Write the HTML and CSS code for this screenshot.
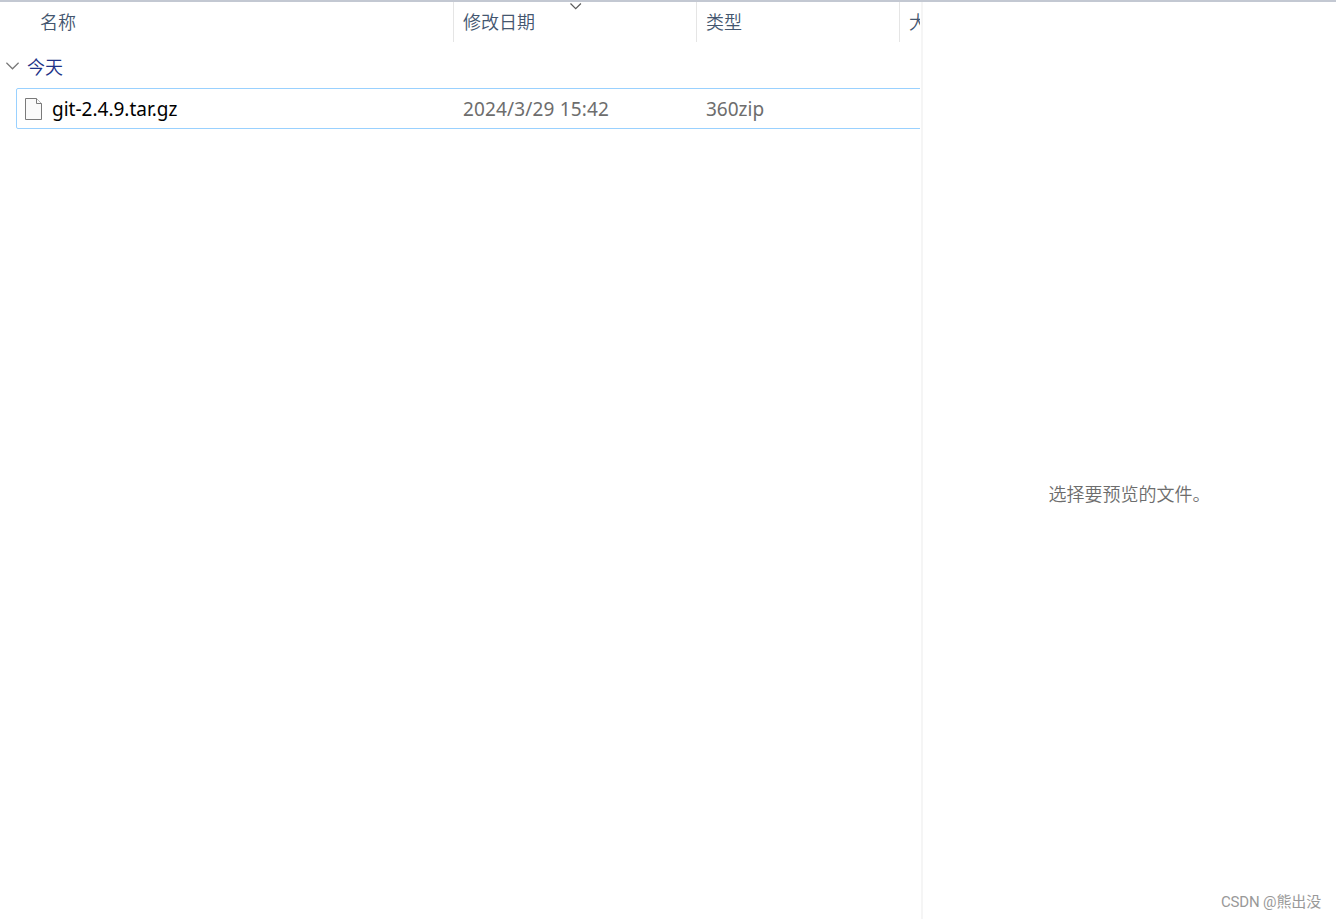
FILE: index.html
```html
<!DOCTYPE html>
<html lang="zh-CN">

<head>
    <meta charset="UTF-8">
    <meta name="viewport" content="width=device-width, initial-scale=1.0">
    <title>文件列表</title>
    <link rel="stylesheet" href="styles.css">
</head>

<body>
    <div class="explorer">
        <div class="file-list">
            <div class="list-header">
                <div class="col col-name">名称</div>
                <div class="col col-date">修改日期
                    <svg class="sort-arrow" width="12" height="7" viewBox="0 0 12 7">
                        <path d="M0.5 0.5L5.7 5.7L10.9 0.5" />
                    </svg>
                </div>
                <div class="col col-type">类型</div>
                <div class="col col-size">大小</div>
            </div>

            <div class="group-title">
                <svg class="group-arrow" width="14" height="8" viewBox="0 0 14 8">
                    <path d="M0.4 0.8L6.5 6.8L12.6 0.8" />
                </svg>
                <span>今天</span>
            </div>

            <div class="file-row">
                <div class="file-name">
                    <svg class="file-icon" width="18" height="22" viewBox="0 0 18 22">
                        <path d="M0.5 0.5H11.5L16.5 5.5V21.5H0.5Z" />
                        <path d="M11.5 0.5V5.5H16.5" />
                    </svg>
                    <span>git-2.4.9.tar.gz</span>
                </div>
                <div class="file-date">2024/3/29 15:42</div>
                <div class="file-type">360zip</div>
            </div>
        </div>

        <div class="preview">
            <p class="preview-text">选择要预览的文件。</p>
            <span class="watermark">CSDN @熊出没</span>
        </div>
    </div>
</body>

</html>
```

FILE: styles.css
```css
body {
    margin: 0;
    background-color: #fff;
    font-family: "Noto Sans", "Noto Sans CJK SC", sans-serif;
    font-size: 18px;
    color: #6d6d6d;
}

.explorer {
    display: flex;
    box-sizing: border-box;
    height: 919px;
    border-top: 2px solid #c3c8d2;
    overflow: hidden;
}

.file-list {
    width: 920px;
    flex: none;
    margin-right: 1px;
    overflow: hidden;
}

.list-header {
    display: flex;
    width: 1000px;
    height: 40px;
    line-height: 38px;
    font-family: "Noto Sans CJK SC", sans-serif;
    font-weight: 350;
    color: #43566f;
}

.col {
    position: relative;
    box-sizing: border-box;
    flex: none;
    padding-left: 9px;
    border-right: 1px solid #e5e5e5;
    white-space: nowrap;
}

.col-name {
    width: 454px;
    padding-left: 40px;
}

.col-date {
    width: 243px;
}

.col-type {
    width: 203px;
}

.col-size {
    width: 100px;
}

.sort-arrow {
    position: absolute;
    left: 116px;
    top: 1px;
}

svg path {
    fill: none;
    stroke: #5a5a5a;
    stroke-width: 1.2;
}

.group-title {
    display: flex;
    align-items: center;
    gap: 7px;
    box-sizing: border-box;
    height: 46px;
    padding: 2px 0 0 6px;
    font-family: "Noto Sans CJK SC", sans-serif;
    font-weight: 350;
    color: #1e3287;
}

.group-arrow path {
    stroke: #777;
}

.file-row {
    display: flex;
    box-sizing: border-box;
    width: 930px;
    height: 41px;
    margin-left: 16px;
    border: 1px solid #99d1ff;
    border-radius: 2px;
    font-size: 19px;
    line-height: 41px;
    white-space: nowrap;
}

.file-name {
    display: flex;
    gap: 9px;
    box-sizing: border-box;
    width: 446px;
    padding-left: 8px;
    color: #000;
}

.file-icon {
    margin-top: 9px;
}

.file-icon path {
    fill: #fafafa;
    stroke: #7a7a7a;
    stroke-width: 1;
}

.file-date {
    width: 243px;
    letter-spacing: 0.15px;
}

.preview {
    position: relative;
    display: flex;
    flex: 1;
    align-items: center;
    justify-content: center;
    border-left: 2px solid #f5f5f5;
}

.preview-text {
    margin: 65px 0 0;
    font-family: "Noto Sans CJK SC", sans-serif;
    font-weight: 350;
}

.watermark {
    position: absolute;
    right: 15px;
    bottom: 6px;
    font-family: Roboto, "Noto Sans CJK SC", sans-serif;
    font-size: 15px;
    line-height: 22px;
    letter-spacing: -0.15px;
    color: #999;
}
```
